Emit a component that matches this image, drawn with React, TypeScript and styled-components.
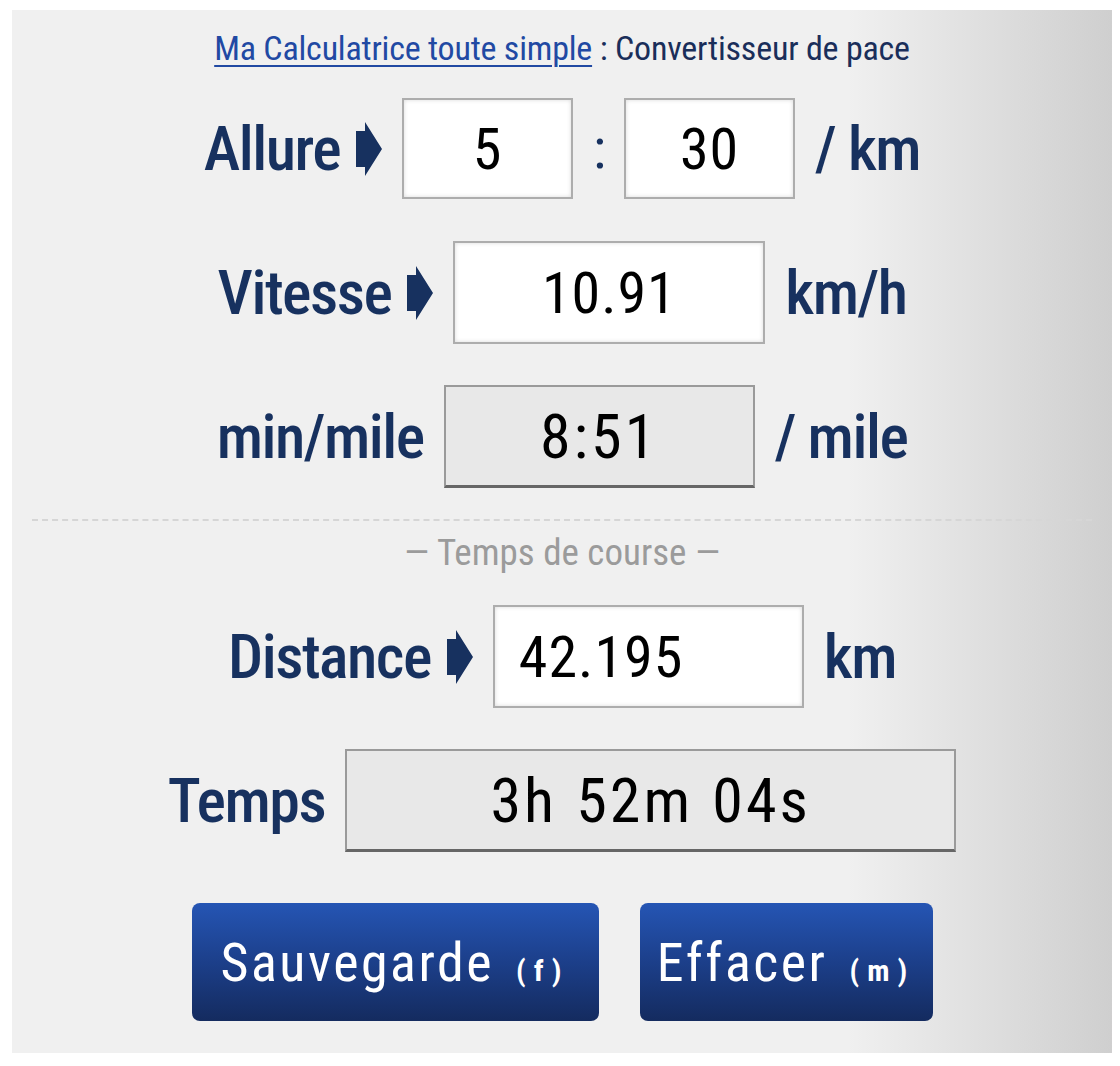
import styled, { createGlobalStyle } from "styled-components";

const GlobalStyle = createGlobalStyle`
  body {
    margin: 0;
    background: #fff;
    font-family: "Roboto Condensed", Roboto, "Liberation Sans Narrow", sans-serif;
  }
`;

const Page = styled.div`
  padding: 10px 8px 13px 12px;
`;

const Panel = styled.main`
  height: 1043px;
  box-sizing: border-box;
  padding-top: 18px;
  display: flex;
  flex-direction: column;
  align-items: center;
  background: linear-gradient(to right, #f0f0f0 0%, #f0f0f0 76%, #cfcfcf 100%);
`;

const Title = styled.h1`
  margin: 0;
  font-size: 34px;
  line-height: 40px;
  font-weight: 400;
  color: #1a2e5a;
  letter-spacing: -0.2px;
`;

const TitleLink = styled.a`
  color: #2149a3;
  text-decoration: underline;
  text-underline-offset: 5px;
  text-decoration-thickness: 2px;
`;

const Row = styled.div<{ $top: number }>`
  display: flex;
  align-items: center;
  gap: 20px;
  margin-top: ${(p) => p.$top}px;
`;

const LabelGroup = styled.div`
  display: flex;
  align-items: center;
  gap: 16px;
`;

const Label = styled.span`
  font-size: 62px;
  font-weight: 500;
  color: #17315f;
  letter-spacing: -1.5px;
  line-height: 1;
`;

const Colon = styled.span`
  font-size: 56px;
  color: #17315f;
  width: 11px;
  text-align: center;
  line-height: 1;
`;

const Field = styled.input<{ $w: number; $h?: number; $align?: string }>`
  width: ${(p) => p.$w}px;
  height: ${(p) => p.$h ?? 103}px;
  box-sizing: border-box;
  border: 2px solid #adadad;
  background: #fff;
  box-shadow: inset 0 0 4px rgba(0, 0, 0, 0.15);
  font-family: inherit;
  font-size: 58px;
  color: #000;
  text-align: ${(p) => p.$align ?? "center"};
  padding: 0 ${(p) => (p.$align === "left" ? "24px" : "0")};
  letter-spacing: 1px;
  outline: none;
`;

const Output = styled.div<{ $w: number }>`
  width: ${(p) => p.$w}px;
  height: 103px;
  box-sizing: border-box;
  display: flex;
  align-items: center;
  justify-content: center;
  background: #e8e8e8;
  border: 2px solid #9a9a9a;
  border-bottom: 3px solid #666;
  font-size: 62px;
  color: #000;
  letter-spacing: 3px;
  word-spacing: 2px;
`;

const Divider = styled.hr`
  align-self: stretch;
  margin: 31px 20px 0 20px;
  border: 0;
  border-top: 2px dashed #d6d6d6;
`;

const Section = styled.div`
  margin-top: 12px;
  font-size: 37px;
  line-height: 40px;
  color: #9b9b9b;
`;

const Buttons = styled.div`
  display: flex;
  gap: 41px;
  margin-top: 51px;
`;

const Button = styled.button<{ $w: number }>`
  width: ${(p) => p.$w}px;
  height: 118px;
  border: 0;
  border-radius: 8px;
  background: linear-gradient(to bottom, #2555b4 0%, #1c3f8a 50%, #142b5f 100%);
  color: #fff;
  font-family: inherit;
  font-size: 54px;
  letter-spacing: 2.5px;
  cursor: pointer;
`;

const Key = styled.span`
  font-size: 30px;
  font-weight: 700;
  letter-spacing: 8px;
  margin-left: 22px;
`;

function Arrow() {
  return (
    <svg width="26" height="54" viewBox="0 0 26 54">
      <path d="M0 9 L9 9 L9 0 L26 27 L9 54 L9 45 L0 45 Z" fill="#17315f" />
    </svg>
  );
}

export default function App() {
  return (
    <>
      <GlobalStyle />
      <Page>
        <Panel>
          <Title>
            <TitleLink href="#">Ma Calculatrice toute simple</TitleLink> : Convertisseur de pace
          </Title>

          <Row $top={30}>
            <LabelGroup>
              <Label>Allure</Label>
              <Arrow />
            </LabelGroup>
            <Field $w={171} $h={101} defaultValue="5" />
            <Colon>:</Colon>
            <Field $w={171} $h={101} defaultValue="30" />
            <Label>/ km</Label>
          </Row>

          <Row $top={42}>
            <LabelGroup>
              <Label>Vitesse</Label>
              <Arrow />
            </LabelGroup>
            <Field $w={312} defaultValue="10.91" />
            <Label>km/h</Label>
          </Row>

          <Row $top={41}>
            <Label>min/mile</Label>
            <Output $w={311}>8:51</Output>
            <Label>/ mile</Label>
          </Row>

          <Divider />
          <Section>— Temps de course —</Section>

          <Row $top={32}>
            <LabelGroup>
              <Label>Distance</Label>
              <Arrow />
            </LabelGroup>
            <Field $w={311} $align="left" defaultValue="42.195" />
            <Label>km</Label>
          </Row>

          <Row $top={41}>
            <Label>Temps</Label>
            <Output $w={611}>3h 52m 04s</Output>
          </Row>

          <Buttons>
            <Button $w={407}>
              Sauvegarde<Key>(f)</Key>
            </Button>
            <Button $w={293}>
              Effacer<Key>(m)</Key>
            </Button>
          </Buttons>
        </Panel>
      </Page>
    </>
  );
}
